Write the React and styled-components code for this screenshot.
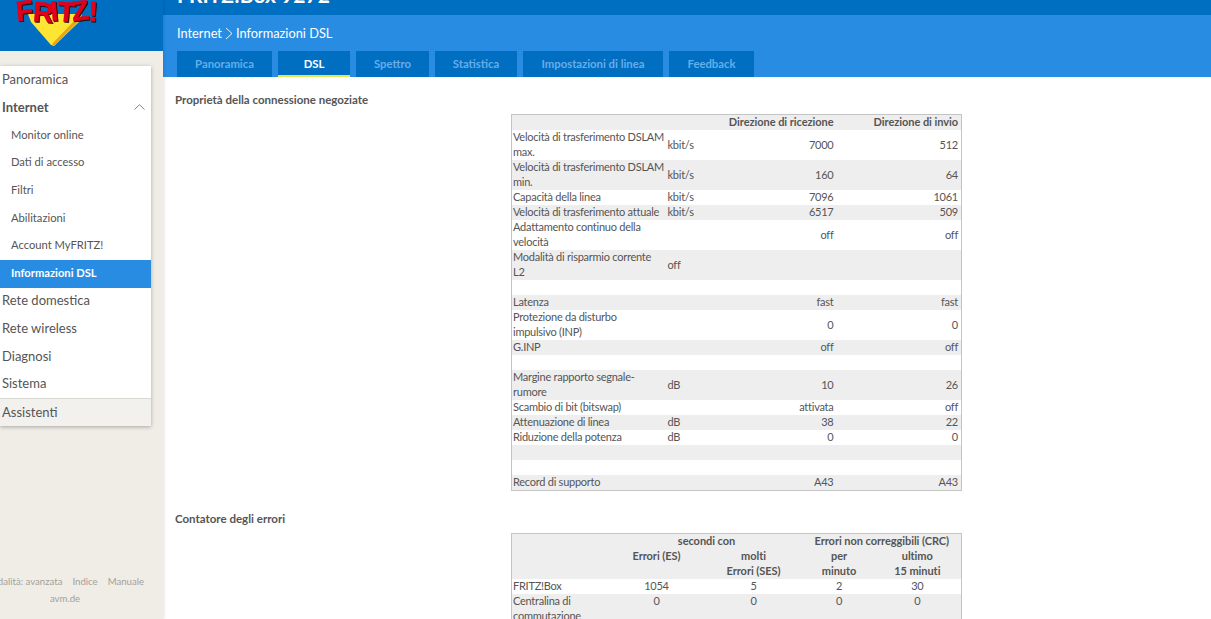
import React from "react";
import styled, { createGlobalStyle } from "styled-components";

const Global = createGlobalStyle`
  html, body { margin: 0; padding: 0; height: 100%; overflow: hidden; background: #fff; }
  body { font-family: Lato, "Noto Sans", sans-serif; color: #4a4a4a; }
  #root { height: 100%; }
`;

const Page = styled.div`
  display: flex;
  width: 1211px;
  height: 619px;
  overflow: hidden;
`;

const Side = styled.aside`
  flex: 0 0 163px;
  display: flex;
  flex-direction: column;
  background: #f0ede6;
  box-shadow: 1px 0 3px rgba(0, 0, 0, 0.12);
  overflow: hidden;
  z-index: 1;
`;

const LogoBar = styled.div`
  height: 51px;
  background: #006fc2;
  flex: none;
`;

const LogoText = styled.text`
  font-family: "Liberation Sans", sans-serif;
  font-weight: 700;
  font-size: 28px;
  letter-spacing: -1.6px;
  fill: #e2001a;
  stroke: #e2001a;
  stroke-width: 0.6px;
  filter: drop-shadow(1.5px 1px 0 #1d0c0c);
`;

const Menu = styled.nav`
  margin: 15px 12px 0 0;
  background: #fff;
  box-shadow: 0 1px 4px rgba(0, 0, 0, 0.3);
`;

const MenuItem = styled.div`
  height: 27.7px;
  display: flex;
  align-items: center;
  justify-content: space-between;
  box-sizing: border-box;
  padding: 0 6px 2px ${(p) => (p.$sub ? "11px" : "2px")};
  font-size: ${(p) => (p.$sub ? "11.2px" : "13px")};
  font-weight: ${(p) => (p.$open || p.$active ? 700 : 400)};
  color: ${(p) => (p.$active ? "#fff" : "#555")};
  background: ${(p) => (p.$active ? "#288ce2" : "transparent")};
`;

const Helper = styled(MenuItem)`
  background: #f3f1ed;
  border-top: 1px solid #d9d7d2;
`;

const Links = styled.div`
  margin-top: 150px;
  display: flex;
  justify-content: flex-end;
  gap: 10px;
  padding-right: 19px;
  white-space: nowrap;
  font-size: 9.6px;
  color: #a3a09a;
`;

const Home = styled.div`
  margin-top: 6px;
  padding-right: 33px;
  text-align: center;
  font-size: 9.6px;
  color: #a3a09a;
`;

const Main = styled.main`
  flex: 1;
  display: flex;
  flex-direction: column;
  min-width: 0;
`;

const TopBar = styled.div`
  height: 15px;
  flex: none;
  background: #006fc2;
  overflow: hidden;
  display: flex;
  align-items: flex-end;
  padding-left: 14px;
`;

const Product = styled.div`
  flex: none;
  margin-bottom: 5px;
  font-size: 21px;
  line-height: 30px;
  font-weight: 700;
  color: #fff;
`;

const Band = styled.div`
  height: 62px;
  flex: none;
  background: #288ce2;
  padding-left: 14px;
  display: flex;
  flex-direction: column;
`;

const Crumbs = styled.div`
  height: 36px;
  display: flex;
  align-items: center;
  gap: 3px;
  font-size: 12.8px;
  color: #fff;
`;

const Tabs = styled.div`
  display: flex;
  gap: 6px;
`;

const Tab = styled.div`
  width: ${(p) => p.$w}px;
  height: 26px;
  box-sizing: border-box;
  display: flex;
  align-items: center;
  justify-content: center;
  background: #006fc2;
  font-size: 11.3px;
  font-weight: 700;
  padding-bottom: ${(p) => (p.$active ? "0" : "2px")};
  color: ${(p) => (p.$active ? "#fff" : "#66ade8")};
  border-bottom: ${(p) => (p.$active ? "2px solid #e3e84f" : "none")};
`;

const Content = styled.div`
  padding: 15px 0 0 12px;
`;

const Heading = styled.h2`
  margin: ${(p) => p.$top || 0}px 0 0;
  font-size: 11.5px;
  line-height: 15px;
  font-weight: 700;
  color: #555;
`;

const Grid = styled.table`
  margin: ${(p) => p.$top}px 0 0 336px;
  width: 450px;
  table-layout: fixed;
  border-collapse: collapse;
  border: 1px solid #c4c4c4;
  font-size: 11px;
  line-height: 15px;
  letter-spacing: -0.25px;
  color: #555;

  td, th {
    padding: 0 3px 0 1px;
    vertical-align: middle;
    height: 15px;
  }
  td:first-child { padding-right: 0; white-space: pre; }
  th { font-weight: 700; background: #eee; color: #555; letter-spacing: -0.05px; }
  tbody tr:nth-child(even) td { background: #eee; }
`;

const Td = styled.td`
  text-align: ${(p) => p.$align || "left"};
  && { vertical-align: ${(p) => p.$valign || "middle"}; }
`;

const Th = styled.th`
  text-align: ${(p) => p.$align || "center"};
`;

// Lato sits about a pixel lower in its line than the original face
const Lift = styled.div`
  margin: -1px 0 1px;
`;

const Cell = ({ children, ...rest }) => (
  <Td {...rest}>
    <Lift>{children}</Lift>
  </Td>
);

const HeadCell = ({ children, ...rest }) => (
  <Th {...rest}>
    <Lift>{children}</Lift>
  </Th>
);

const speedRows = [
  ["Velocità di trasferimento DSLAM\nmax.", "kbit/s", "7000", "512"],
  ["Velocità di trasferimento DSLAM\nmin.", "kbit/s", "160", "64"],
  ["Capacità della linea", "kbit/s", "7096", "1061"],
  ["Velocità di trasferimento attuale", "kbit/s", "6517", "509"],
  ["Adattamento continuo della\nvelocità", "", "off", "off"],
  ["Modalità di risparmio corrente\nL2", "off", "", ""],
  ["", "", "", ""],
  ["Latenza", "", "fast", "fast"],
  ["Protezione da disturbo\nimpulsivo (INP)", "", "0", "0"],
  ["G.INP", "", "off", "off"],
  ["", "", "", ""],
  ["Margine rapporto segnale-\nrumore", "dB", "10", "26"],
  ["Scambio di bit (bitswap)", "", "attivata", "off"],
  ["Attenuazione di linea", "dB", "38", "22"],
  ["Riduzione della potenza", "dB", "0", "0"],
  ["", "", "", ""],
  ["", "", "", ""],
  ["Record di supporto", "", "A43", "A43"],
];

const errorRows = [
  ["FRITZ!Box", "1054", "5", "2", "30"],
  ["Centralina di\ncommutazione", "0", "0", "0", "0"],
];

const subMenu = ["Monitor online", "Dati di accesso", "Filtri", "Abilitazioni", "Account MyFRITZ!"];
const tabs = [
  ["Panoramica", 95],
  ["DSL", 72],
  ["Spettro", 73],
  ["Statistica", 82],
  ["Impostazioni di linea", 140],
  ["Feedback", 85],
];

const Logo = () => (
  <svg width="163" height="51" viewBox="0 0 163 51">
    <path d="M28 14 L82 14 L80 21 L54 46 L51 45 L31 22 Z" fill="#ffe533" />
    <path d="M80 20 L54 46 L52 44 L74 21 Z" fill="#e6a817" />
    <LogoText x="17" y="21" rotate="-6 5 -5 4 -6 2">FRITZ!</LogoText>
  </svg>
);

const Chevron = () => (
  <svg width="11" height="6" viewBox="0 0 11 6" fill="none" stroke="#777" strokeWidth="0.9">
    <path d="M0.5 5.5 L5.5 0.7 L10.5 5.5" />
  </svg>
);

const Separator = () => (
  <svg width="8" height="13" viewBox="0 0 8 13" fill="none" stroke="#fff" strokeWidth="0.9">
    <path d="M1 1 L7 6.5 L1 12" />
  </svg>
);

export default function App() {
  return (
    <Page>
      <Global />
      <Side>
        <LogoBar>
          <Logo />
        </LogoBar>
        <Menu>
          <MenuItem>Panoramica</MenuItem>
          <MenuItem $open>
            Internet
            <Chevron />
          </MenuItem>
          {subMenu.map((label) => (
            <MenuItem $sub key={label}>{label}</MenuItem>
          ))}
          <MenuItem $sub $active>Informazioni DSL</MenuItem>
          <MenuItem>Rete domestica</MenuItem>
          <MenuItem>Rete wireless</MenuItem>
          <MenuItem>Diagnosi</MenuItem>
          <MenuItem>Sistema</MenuItem>
          <Helper>Assistenti</Helper>
        </Menu>
        <Links>
          <span>Modalità: avanzata</span>
          <span>Indice</span>
          <span>Manuale</span>
        </Links>
        <Home>avm.de</Home>
      </Side>
      <Main>
        <TopBar>
          <Product>FRITZ!Box 9272</Product>
        </TopBar>
        <Band>
          <Crumbs>
            Internet
            <Separator />
            Informazioni DSL
          </Crumbs>
          <Tabs>
            {tabs.map(([label, w]) => (
              <Tab key={label} $w={w} $active={label === "DSL"}>{label}</Tab>
            ))}
          </Tabs>
        </Band>
        <Content>
          <Heading>Proprietà della connessione negoziate</Heading>
          <Grid $top={7}>
            <colgroup>
              <col style={{ width: 155 }} />
              <col style={{ width: 40 }} />
              <col style={{ width: 130 }} />
              <col style={{ width: 125 }} />
            </colgroup>
            <thead>
              <tr>
                <HeadCell />
                <HeadCell />
                <HeadCell $align="right">Direzione di ricezione</HeadCell>
                <HeadCell $align="right">Direzione di invio</HeadCell>
              </tr>
            </thead>
            <tbody>
              {speedRows.map((row, i) => (
                <tr key={i}>
                  <Cell>{row[0]}</Cell>
                  <Cell>{row[1]}</Cell>
                  <Cell $align="right">{row[2]}</Cell>
                  <Cell $align="right">{row[3]}</Cell>
                </tr>
              ))}
            </tbody>
          </Grid>
          <Heading $top={20}>Contatore degli errori</Heading>
          <Grid $top={7}>
            <colgroup>
              <col style={{ width: 99 }} />
              <col style={{ width: 94 }} />
              <col style={{ width: 100 }} />
              <col style={{ width: 71 }} />
              <col style={{ width: 86 }} />
            </colgroup>
            <thead>
              <tr>
                <HeadCell />
                <HeadCell colSpan={2}>secondi con</HeadCell>
                <HeadCell colSpan={2}>Errori non correggibili (CRC)</HeadCell>
              </tr>
              <tr>
                <HeadCell />
                <HeadCell>Errori (ES)</HeadCell>
                <HeadCell>molti</HeadCell>
                <HeadCell>per</HeadCell>
                <HeadCell>ultimo</HeadCell>
              </tr>
              <tr>
                <HeadCell />
                <HeadCell />
                <HeadCell>Errori (SES)</HeadCell>
                <HeadCell>minuto</HeadCell>
                <HeadCell>15 minuti</HeadCell>
              </tr>
            </thead>
            <tbody>
              {errorRows.map((row) => (
                <tr key={row[0]}>
                  <Cell>{row[0]}</Cell>
                  {row.slice(1).map((v, i) => (
                    <Cell key={i} $align="center" $valign="top">{v}</Cell>
                  ))}
                </tr>
              ))}
            </tbody>
          </Grid>
        </Content>
      </Main>
    </Page>
  );
}
